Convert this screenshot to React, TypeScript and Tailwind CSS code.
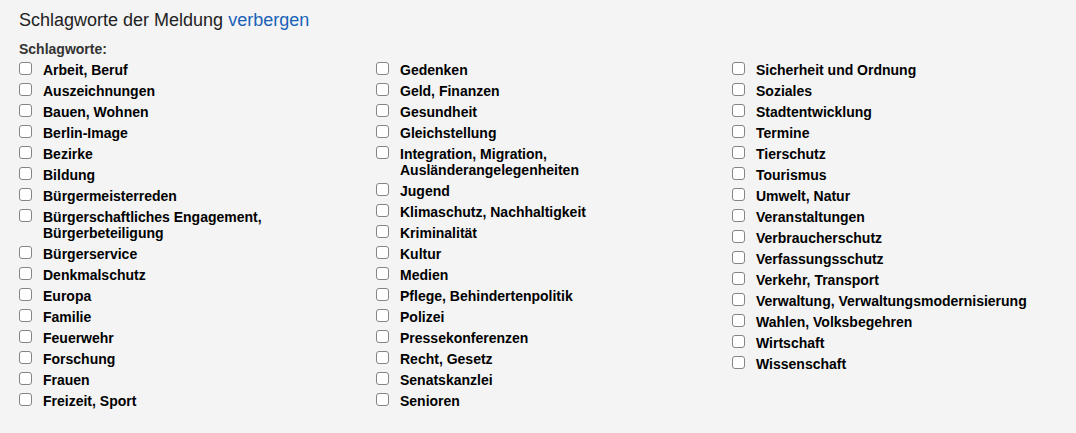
const col1 = [
  "Arbeit, Beruf",
  "Auszeichnungen",
  "Bauen, Wohnen",
  "Berlin-Image",
  "Bezirke",
  "Bildung",
  "Bürgermeisterreden",
  "Bürgerschaftliches Engagement, Bürgerbeteiligung",
  "Bürgerservice",
  "Denkmalschutz",
  "Europa",
  "Familie",
  "Feuerwehr",
  "Forschung",
  "Frauen",
  "Freizeit, Sport",
];

const col2 = [
  "Gedenken",
  "Geld, Finanzen",
  "Gesundheit",
  "Gleichstellung",
  "Integration, Migration, Ausländerangelegenheiten",
  "Jugend",
  "Klimaschutz, Nachhaltigkeit",
  "Kriminalität",
  "Kultur",
  "Medien",
  "Pflege, Behindertenpolitik",
  "Polizei",
  "Pressekonferenzen",
  "Recht, Gesetz",
  "Senatskanzlei",
  "Senioren",
];

const col3 = [
  "Sicherheit und Ordnung",
  "Soziales",
  "Stadtentwicklung",
  "Termine",
  "Tierschutz",
  "Tourismus",
  "Umwelt, Natur",
  "Veranstaltungen",
  "Verbraucherschutz",
  "Verfassungsschutz",
  "Verkehr, Transport",
  "Verwaltung, Verwaltungsmodernisierung",
  "Wahlen, Volksbegehren",
  "Wirtschaft",
  "Wissenschaft",
];

function Item({ label }: { label: string }) {
  return (
    <label className="flex items-start mb-[5px]">
      <input
        type="checkbox"
        className="appearance-none m-0 mt-[0px] w-[13px] h-[13px] shrink-0 bg-white border border-[#858585] rounded-[3px] checked:bg-[#0075ff] checked:border-[#0075ff]"
      />
      <span className="ml-[11px] max-w-[300px] text-[14px] leading-[16px] font-bold text-black">
        {label}
      </span>
    </label>
  );
}

export default function App() {
  return (
    <div
      className="w-[1076px] h-[433px] bg-[#f4f4f4] pl-[19px] pt-[8px]"
      style={{ fontFamily: '"Liberation Sans", Arial, sans-serif' }}
    >
      <h2 className="text-[18px] leading-[24px] text-[#222]">
        Schlagworte der Meldung{" "}
        <a className="text-[#1a62b8] cursor-pointer">verbergen</a>
      </h2>
      <div className="mt-[9px] text-[14px] leading-[16px] font-bold text-[#333]">
        Schlagworte:
      </div>
      <div className="mt-[5px] grid grid-cols-[357px_356px_356px]">
        {[col1, col2, col3].map((col, i) => (
          <div key={i} className="flex flex-col">
            {col.map((l) => (
              <Item key={l} label={l} />
            ))}
          </div>
        ))}
      </div>
    </div>
  );
}
